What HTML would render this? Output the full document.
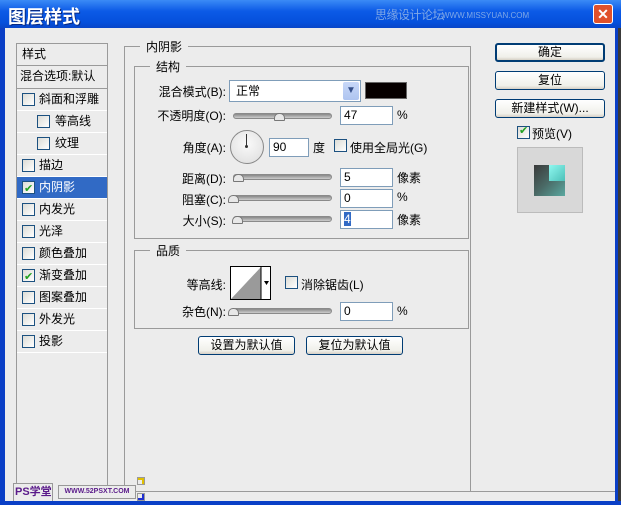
<!DOCTYPE html>
<html><head><meta charset="utf-8"><style>
*{margin:0;padding:0;box-sizing:border-box}
html,body{width:621px;height:505px;overflow:hidden}
body{background:#0a3fc6;font-family:"Liberation Sans","Noto Sans CJK SC",sans-serif;font-size:12px;color:#000;position:relative}
.a{position:absolute;white-space:nowrap}
#title{left:0;top:0;width:621px;height:28px;background:linear-gradient(#3b8bf6,#0c5ae6 40%,#0550dc 80%,#0846c8)}
#win{left:5px;top:28px;width:610px;height:473px;background:#ececec}
.ln{position:absolute;background:#9a9a9a}
.row{position:absolute;left:17px;width:90px;height:22px;border-bottom:1px solid #fff;line-height:21px;padding-left:22px;white-space:nowrap}
.cb{position:absolute;width:13px;height:13px;border:1px solid #1c5180;background:linear-gradient(135deg,#dcdcd6,#fff)}
.row .cb{left:5px;top:4px}
.chk::after{content:"✔";position:absolute;left:1px;top:-3px;color:#21a121;font-size:11px}
.lbl{position:absolute;text-align:right;white-space:nowrap}
.inp{position:absolute;height:19px;background:#fff;border:1px solid #7f9db9;padding-left:3px;line-height:17px}
.trk{position:absolute;height:6px;border-radius:3px;background:linear-gradient(#888,#ccc);border:1px solid #8a8a8a;width:99px;left:233px}
.th{position:absolute;width:11px;height:8px;background:#e8e8e8;border:1px solid #777;border-radius:5px 5px 1px 1px}
.btn{position:absolute;height:19px;border:1px solid #003c74;border-radius:3px;background:linear-gradient(#fff,#f0f0ea 80%,#d6d0c5);text-align:center;line-height:17px;white-space:nowrap}
.leg{position:absolute;background:#ececec;padding:0 6px;white-space:nowrap}
</style></head><body>
<div class="a" id="title"></div>
<div class="a" style="left:8px;top:3px;color:#fff;font-size:18px;font-weight:bold;text-shadow:1px 1px #0a2a80">图层样式</div>
<div class="a" style="left:375px;top:6px;color:#7fa8e6;font-size:12px;letter-spacing:-0.5px">思缘设计论坛</div>
<div class="a" style="left:442px;top:11px;color:#7fa8e6;font-size:8px">WWW.MISSYUAN.COM</div>
<div class="a" style="left:593px;top:4px;width:20px;height:20px;border:1px solid #fff;border-radius:3px;background:#e0512b;color:#fff;text-align:center;font-weight:bold;font-size:14px;line-height:18px">✕</div>
<div class="a" id="win"></div>
<div class="a" style="left:615px;top:28px;width:6px;height:477px;background:#3a3a3a"></div>
<div class="a" style="left:615px;top:28px;width:3px;height:477px;background:#0a3fc6"></div>

<div class="ln" style="left:16px;top:43px;width:1px;height:448px"></div>
<div class="ln" style="left:107px;top:43px;width:1px;height:448px"></div>
<div class="ln" style="left:16px;top:43px;width:92px;height:1px"></div>
<div class="ln" style="left:16px;top:65px;width:92px;height:1px"></div>
<div class="ln" style="left:16px;top:88px;width:92px;height:1px"></div>
<div class="a" style="left:22px;top:44px;line-height:20px">样式</div>
<div class="a" style="left:20px;top:66px;line-height:20px">混合选项:默认</div>
<div class="row" style="top:89px"><span class="cb"></span>斜面和浮雕</div>
<div class="row" style="top:111px;padding-left:38px"><span class="cb" style="left:20px"></span>等高线</div>
<div class="row" style="top:133px;padding-left:38px"><span class="cb" style="left:20px"></span>纹理</div>
<div class="row" style="top:155px"><span class="cb"></span>描边</div>
<div class="row" style="top:177px;background:#316ac5;color:#fff"><span class="cb chk"></span>内阴影</div>
<div class="row" style="top:199px"><span class="cb"></span>内发光</div>
<div class="row" style="top:221px"><span class="cb"></span>光泽</div>
<div class="row" style="top:243px"><span class="cb"></span>颜色叠加</div>
<div class="row" style="top:265px"><span class="cb chk"></span>渐变叠加</div>
<div class="row" style="top:287px"><span class="cb"></span>图案叠加</div>
<div class="row" style="top:309px"><span class="cb"></span>外发光</div>
<div class="row" style="top:331px"><span class="cb"></span>投影</div>

<div class="a" style="left:124px;top:46px;width:347px;height:446px;border:1px solid #9a9a9a;border-right:none"></div>
<div class="ln" style="left:470px;top:46px;width:1px;height:446px"></div>
<div class="leg" style="left:140px;top:38px">内阴影</div>
<div class="a" style="left:134px;top:66px;width:335px;height:173px;border:1px solid #9a9a9a"></div>
<div class="leg" style="left:150px;top:58px">结构</div>

<div class="lbl" style="right:395px;top:83px">混合模式(B):</div>
<div class="inp" style="left:229px;top:80px;width:132px;height:22px;line-height:20px;padding-left:6px">正常</div>
<div class="a" style="left:343px;top:82px;width:16px;height:18px;background:linear-gradient(#c8d8f8,#aec4f0);border-radius:2px;color:#36508a;text-align:center;font-size:10px;line-height:18px">▼</div>
<div class="a" style="left:365px;top:82px;width:42px;height:17px;background:#060000;border:1px solid #666"></div>

<div class="lbl" style="right:395px;top:107px">不透明度(O):</div>
<div class="trk" style="top:113px"></div><div class="th" style="left:274px;top:113px"></div>
<div class="inp" style="left:340px;top:106px;width:53px">47</div>
<div class="a" style="left:397px;top:108px">%</div>

<div class="lbl" style="right:395px;top:139px">角度(A):</div>
<div class="a" style="left:230px;top:130px;width:34px;height:34px;border-radius:50%;border:1px solid #888;background:radial-gradient(circle at 50% 40%,#fafafa,#dcdcdc)"></div>
<div class="a" style="left:246px;top:134px;width:1px;height:13px;background:#333"></div>
<div class="a" style="left:245px;top:145px;width:3px;height:3px;border-radius:50%;background:#333"></div>
<div class="inp" style="left:269px;top:138px;width:40px">90</div>
<div class="a" style="left:313px;top:139px">度</div>
<div class="cb" style="left:334px;top:139px"></div>
<div class="a" style="left:350px;top:139px">使用全局光(G)</div>

<div class="lbl" style="right:395px;top:170px">距离(D):</div>
<div class="trk" style="top:174px"></div><div class="th" style="left:233px;top:174px"></div>
<div class="inp" style="left:340px;top:168px;width:53px">5</div>
<div class="a" style="left:397px;top:169px">像素</div>

<div class="lbl" style="right:395px;top:191px">阻塞(C):</div>
<div class="trk" style="top:195px"></div><div class="th" style="left:228px;top:195px"></div>
<div class="inp" style="left:340px;top:189px;width:53px">0</div>
<div class="a" style="left:397px;top:190px">%</div>

<div class="lbl" style="right:395px;top:212px">大小(S):</div>
<div class="trk" style="top:216px"></div><div class="th" style="left:232px;top:216px"></div>
<div class="inp" style="left:340px;top:210px;width:53px"><span style="background:#316ac5;color:#fff">4</span></div>
<div class="a" style="left:397px;top:211px">像素</div>

<div class="a" style="left:134px;top:250px;width:335px;height:79px;border:1px solid #9a9a9a"></div>
<div class="leg" style="left:150px;top:242px">品质</div>
<div class="lbl" style="right:395px;top:276px">等高线:</div>
<div class="a" style="left:230px;top:266px;width:41px;height:34px;border:1px solid #000;background:#fff;overflow:hidden">
<svg width="41" height="34" style="position:absolute;left:0;top:0"><polygon points="0,32 30,0 30,32" fill="#9a9a9a"/><line x1="30" y1="0" x2="30" y2="34" stroke="#000"/><polygon points="33,14 38,14 35.5,18" fill="#000"/></svg></div>
<div class="cb" style="left:285px;top:276px"></div>
<div class="a" style="left:301px;top:276px">消除锯齿(L)</div>
<div class="lbl" style="right:395px;top:303px">杂色(N):</div>
<div class="trk" style="top:308px"></div><div class="th" style="left:228px;top:308px"></div>
<div class="inp" style="left:340px;top:302px;width:53px">0</div>
<div class="a" style="left:397px;top:304px">%</div>

<div class="btn" style="left:198px;top:336px;width:97px">设置为默认值</div>
<div class="btn" style="left:306px;top:336px;width:97px">复位为默认值</div>

<div class="btn" style="left:495px;top:43px;width:110px;border-width:2px;line-height:15px">确定</div>
<div class="btn" style="left:495px;top:71px;width:110px">复位</div>
<div class="btn" style="left:495px;top:99px;width:110px">新建样式(W)...</div>
<div class="cb chk" style="left:517px;top:126px"></div>
<div class="a" style="left:532px;top:125px">预览(V)</div>
<div class="a" style="left:517px;top:147px;width:66px;height:66px;background:#d8d8d8;border:1px solid #bbb"></div>
<div class="a" style="left:534px;top:165px;width:31px;height:31px;background:linear-gradient(135deg,#3a3a3a,#4a6a66 50%,#5aa8a0)"></div>
<div class="a" style="left:549px;top:165px;width:16px;height:16px;background:linear-gradient(135deg,#8ff8f0,#4cc0b8)"></div>

<div class="ln" style="left:138px;top:491px;width:477px;height:1px"></div>
<div class="a" style="left:13px;top:483px;width:40px;height:19px;background:#ececec;border:1px solid #999;color:#5a1a8a;font-weight:bold;font-size:11px;line-height:17px;padding-left:1px;overflow:hidden">PS学堂</div>
<div class="a" style="left:58px;top:485px;width:78px;height:14px;border:1px solid #999;background:#ececec;color:#5a1a8a;font-size:7px;font-weight:bold;line-height:12px;text-align:center;overflow:hidden">WWW.52PSXT.COM</div>
<div class="a" style="left:138px;top:478px;width:6px;height:6px;border-top:2px solid #e0c000;border-right:2px solid #e0c000;outline:1px solid #999"></div>
<div class="a" style="left:138px;top:494px;width:6px;height:6px;border-bottom:2px solid #2030d0;border-right:2px solid #2030d0;outline:1px solid #999"></div>
<div class="a" style="left:0;top:501px;width:621px;height:4px;background:#0a3fc6"></div>
</body></html>
